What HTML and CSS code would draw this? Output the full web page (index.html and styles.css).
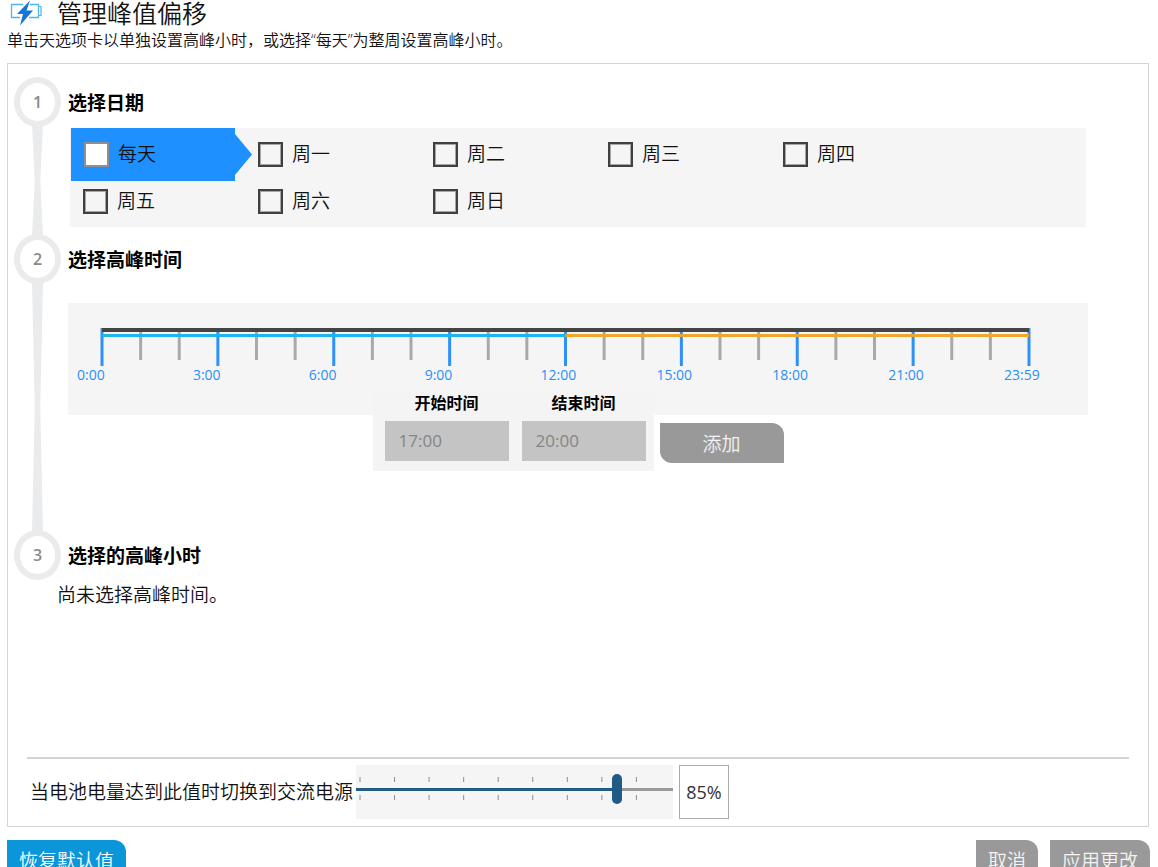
FILE: index.html
```html
<!DOCTYPE html>
<html lang="zh-CN">
<head>
<meta charset="utf-8">
<title>管理峰值偏移</title>
<link rel="stylesheet" href="styles.css">
</head>
<body>
<main class="page">
  <header class="header">
    <svg class="logo" width="34" height="28" viewBox="0 0 34 28" aria-hidden="true">
      <path d="M14 4.500H2.500V17.500H11M20 17.500H29.500V4.500H21" fill="none" stroke="#4db4ee" stroke-width="1.300"/>
      <path d="M29.500 6.500H32V15.500H29.500" fill="none" stroke="#4db4ee" stroke-width="1.200"/>
      <path d="M21 0.500L8 14H14L11 25.500L24 10.500H17.500Z" fill="#1476d8"/>
    </svg>
    <h1 class="title">管理峰值偏移</h1>
  </header>
  <p class="intro">单击天选项卡以单独设置高峰小时，或选择“每天”为整周设置高峰小时。</p>

  <section class="card">
    <section class="step">
      <div class="rail"><span class="badge">1</span><span class="connector"></span></div>
      <div class="content">
        <h2 class="step-title">选择日期</h2>
        <div class="days">
          <label class="day day-active"><input class="check" type="checkbox"><span class="day-name">每天</span></label>
          <label class="day"><input class="check" type="checkbox"><span class="day-name">周一</span></label>
          <label class="day"><input class="check" type="checkbox"><span class="day-name">周二</span></label>
          <label class="day"><input class="check" type="checkbox"><span class="day-name">周三</span></label>
          <label class="day"><input class="check" type="checkbox"><span class="day-name">周四</span></label>
          <label class="day"><input class="check" type="checkbox"><span class="day-name">周五</span></label>
          <label class="day"><input class="check" type="checkbox"><span class="day-name">周六</span></label>
          <label class="day"><input class="check" type="checkbox"><span class="day-name">周日</span></label>
        </div>
      </div>
    </section>

    <section class="step">
      <div class="rail"><span class="badge">2</span><span class="connector"></span></div>
      <div class="content">
        <h2 class="step-title">选择高峰时间</h2>
        <div class="timeline">
          <svg class="ruler" height="38" aria-hidden="true">
            <g class="minor">
              <line x1="4.167%" x2="4.167%" y1="0" y2="32"/><line x1="8.333%" x2="8.333%" y1="0" y2="32"/>
              <line x1="16.667%" x2="16.667%" y1="0" y2="32"/><line x1="20.833%" x2="20.833%" y1="0" y2="32"/>
              <line x1="29.167%" x2="29.167%" y1="0" y2="32"/><line x1="33.333%" x2="33.333%" y1="0" y2="32"/>
              <line x1="41.667%" x2="41.667%" y1="0" y2="32"/><line x1="45.833%" x2="45.833%" y1="0" y2="32"/>
              <line x1="54.167%" x2="54.167%" y1="0" y2="32"/><line x1="58.333%" x2="58.333%" y1="0" y2="32"/>
              <line x1="66.667%" x2="66.667%" y1="0" y2="32"/><line x1="70.833%" x2="70.833%" y1="0" y2="32"/>
              <line x1="79.167%" x2="79.167%" y1="0" y2="32"/><line x1="83.333%" x2="83.333%" y1="0" y2="32"/>
              <line x1="91.667%" x2="91.667%" y1="0" y2="32"/><line x1="95.833%" x2="95.833%" y1="0" y2="32"/>
            </g>
            <g class="major">
              <line x1="0%" x2="0%" y1="0" y2="38"/><line x1="12.5%" x2="12.5%" y1="0" y2="38"/>
              <line x1="25%" x2="25%" y1="0" y2="38"/><line x1="37.5%" x2="37.5%" y1="0" y2="38"/>
              <line x1="50%" x2="50%" y1="0" y2="38"/><line x1="62.5%" x2="62.5%" y1="0" y2="38"/>
              <line x1="75%" x2="75%" y1="0" y2="38"/><line x1="87.5%" x2="87.5%" y1="0" y2="38"/>
              <line x1="100%" x2="100%" y1="0" y2="38"/>
            </g>
            <rect x="0" y="0" width="100%" height="4" fill="#444"/>
            <rect x="0" y="6" width="50%" height="3" fill="#1fb4ec"/>
            <rect x="50%" y="6" width="50%" height="3" fill="#f0a52e"/>
          </svg>
          <ol class="hours">
            <li>0:00</li><li>3:00</li><li>6:00</li><li>9:00</li><li>12:00</li><li>15:00</li><li>18:00</li><li>21:00</li><li>23:59</li>
          </ol>
        </div>
        <div class="range-form">
          <div class="range-fields">
            <div class="field">
              <label class="field-label" for="start">开始时间</label>
              <input class="field-input" id="start" type="text" value="17:00" disabled>
            </div>
            <div class="field">
              <label class="field-label" for="end">结束时间</label>
              <input class="field-input" id="end" type="text" value="20:00" disabled>
            </div>
          </div>
          <button class="button button-add" type="button" disabled>添加</button>
        </div>
      </div>
    </section>

    <section class="step">
      <div class="rail"><span class="badge">3</span></div>
      <div class="content"><h2 class="step-title">选择的高峰小时</h2></div>
    </section>
    <p class="empty">尚未选择高峰时间。</p>

    <div class="power">
      <label class="power-label" for="level">当电池电量达到此值时切换到交流电源</label>
      <div class="slider">
        <svg class="ticks" aria-hidden="true">
          <g stroke="#8c8c8c" stroke-width="1">
            <line x1="0%" x2="0%" y1="0" y2="5"/><line x1="11.11%" x2="11.11%" y1="0" y2="5"/><line x1="22.22%" x2="22.22%" y1="0" y2="5"/>
            <line x1="33.33%" x2="33.33%" y1="0" y2="5"/><line x1="44.44%" x2="44.44%" y1="0" y2="5"/><line x1="55.55%" x2="55.55%" y1="0" y2="5"/>
            <line x1="66.66%" x2="66.66%" y1="0" y2="5"/><line x1="77.77%" x2="77.77%" y1="0" y2="5"/><line x1="88.88%" x2="88.88%" y1="0" y2="5"/>
            <line x1="0%" x2="0%" y1="18" y2="23"/><line x1="11.11%" x2="11.11%" y1="18" y2="23"/><line x1="22.22%" x2="22.22%" y1="18" y2="23"/>
            <line x1="33.33%" x2="33.33%" y1="18" y2="23"/><line x1="44.44%" x2="44.44%" y1="18" y2="23"/><line x1="55.55%" x2="55.55%" y1="18" y2="23"/>
            <line x1="66.66%" x2="66.66%" y1="18" y2="23"/><line x1="77.77%" x2="77.77%" y1="18" y2="23"/><line x1="88.88%" x2="88.88%" y1="18" y2="23"/>
          </g>
        </svg>
        <input class="level" id="level" type="range" min="10" max="100" value="85" style="--fill: 83%">
      </div>
      <output class="value" for="level">85%</output>
    </div>
  </section>

  <footer class="footer">
    <button class="button button-primary" type="button">恢复默认值</button>
    <div class="actions">
      <button class="button" type="button">取消</button>
      <button class="button" type="button">应用更改</button>
    </div>
  </footer>
</main>
</body>
</html>
```
FILE: styles.css
```css
* { box-sizing: border-box; }

html { overflow: hidden; }

body {
  margin: 0;
  background: #fff;
  color: #111;
  font-family: "Open Sans", "Noto Sans CJK SC", sans-serif;
  font-size: 19px;
  font-weight: 350;
}

h1, h2, p, ol { margin: 0; padding: 0; }

.page { padding: 0 8px 0 7px; }

.header {
  display: flex;
  gap: 14px;
  height: 28px;
  padding-left: 2px;
}

.logo { flex: none; }

.title {
  font-size: 25px;
  font-weight: 350;
  line-height: 26px;
}

.intro {
  font-size: 16px;
  line-height: 24px;
}

.card {
  margin: 11px 1px 0 0;
  padding-top: 13px;
  border: 1px solid #d4d4d4;
}

.step {
  display: flex;
  gap: 7px;
  padding: 0 60px 0 6px;
}

.rail {
  display: flex;
  flex: none;
  flex-direction: column;
  align-items: center;
  width: 47px;
}

.badge {
  display: flex;
  flex: none;
  align-items: center;
  justify-content: center;
  width: 47px;
  height: 50px;
  border: 6px solid #ebebeb;
  border-radius: 50%;
  color: #8a8a8a;
  font-size: 16px;
  font-weight: 600;
}

.connector {
  flex: 1;
  width: 11px;
  margin: -2px 0;
  background: #e9ebed;
  clip-path: polygon(0 0, 100% 0, 75% 50%, 100% 100%, 0 100%, 25% 50%);
}

.content { flex: 1; min-width: 0; }

.step-title {
  padding: 2px 0 0;
  color: #000;
  font-size: 19px;
  font-weight: 700;
  line-height: 49px;
}

.days {
  display: grid;
  grid-template-columns: repeat(auto-fill, 175px);
  grid-auto-rows: 47px;
  margin: 0 2px 7px;
  padding: 3px 0 2px;
  background: #f5f5f5;
}

.day {
  display: flex;
  position: relative;
  align-items: center;
  gap: 9px;
  padding-left: 13px;
}

.day-name { padding-bottom: 4px; }

.day-active {
  z-index: 1;
  padding-left: 14px;
}

.day-active::before {
  content: "";
  position: absolute;
  z-index: -1;
  inset: -3px -7px -3px 1px;
  background: #1e90ff;
  clip-path: polygon(0 0, 164px 0, 164px 6px, 100% 50%, 164px 47px, 164px 100%, 0 100%);
}

.check {
  appearance: none;
  width: 25px;
  height: 25px;
  margin: 0;
  border: 2px solid #404040;
  box-shadow: inset 0 0 0 1px #a6a6a6;
}

.check:checked { background: #484848; }

.day-active .check {
  border-color: #8f8f8f;
  background: #fff;
  box-shadow: none;
}

.timeline {
  height: 112px;
  margin-top: 18px;
  padding: 25px 59px 0 9px;
  background: #f5f5f5;
}

.ruler {
  display: block;
  width: calc(100% - 25px);
  margin-left: 25px;
  overflow: visible;
}

.minor { stroke: #a9a9a9; stroke-width: 3px; }
.major { stroke: #2e90fa; stroke-width: 3px; }

.hours {
  display: flex;
  margin-right: 25px;
  color: #2b8ff5;
  font-size: 14px;
  font-weight: 400;
  line-height: 18px;
  list-style: none;
}

.hours li { flex: none; width: 12.5%; }

.range-form {
  display: flex;
  position: relative;
  align-items: flex-end;
  justify-content: center;
  gap: 6px;
  margin: -25px 0 59px;
}

.range-fields {
  display: flex;
  gap: 13px;
  padding: 0 8px 10px 12px;
  background: #f4f4f4;
}

.field {
  display: flex;
  flex-direction: column;
  gap: 5px;
  width: 124px;
}

.field-label {
  color: #000;
  font-size: 16px;
  font-weight: 700;
  line-height: 26px;
  text-align: center;
}

.field-input {
  width: 100%;
  height: 40px;
  padding: 0 14px 2px;
  border: 0;
  background: #c4c4c4;
  color: #858585;
  font: 400 17px "Open Sans", sans-serif;
}

.button {
  height: 40px;
  padding: 0 12px;
  border: 0;
  border-radius: 0 12px 0 12px;
  background: #999;
  color: #f4f4f4;
  font: inherit;
}

.button-add { width: 124px; margin-bottom: 8px; }

.button-primary { background: #0a96d8; color: #fff; }

.empty {
  padding-left: 49px;
  line-height: 28px;
}

.power {
  display: flex;
  gap: 3px;
  margin: 148px 19px 0;
  padding: 6px 3px 7px;
  border-top: 2px solid #d3d3d3;
}

.power-label { line-height: 54px; }

.slider {
  position: relative;
  width: 317px;
  height: 54px;
  margin-right: 3px;
  background: #f5f5f5;
}

.ticks {
  position: absolute;
  top: 12px;
  left: 4px;
  width: calc(100% - 6px);
  height: 23px;
  overflow: visible;
}

.level {
  appearance: none;
  display: block;
  position: relative;
  width: 100%;
  height: 48px;
  margin: 0;
  background: none;
}

.level::-webkit-slider-runnable-track {
  height: 3px;
  background: linear-gradient(90deg, #245b80 var(--fill), #999 var(--fill));
}

.level::-webkit-slider-thumb {
  appearance: none;
  width: 10px;
  height: 30px;
  margin-top: -14px;
  border-radius: 5px;
  background: #205a85;
}

.value {
  width: 50px;
  border: 1px solid #ababab;
  color: #333;
  font-size: 18px;
  font-weight: 400;
  line-height: 52px;
  text-align: center;
}

.footer {
  display: flex;
  justify-content: space-between;
  margin-top: 13px;
}

.actions { display: flex; gap: 12px; }
```
